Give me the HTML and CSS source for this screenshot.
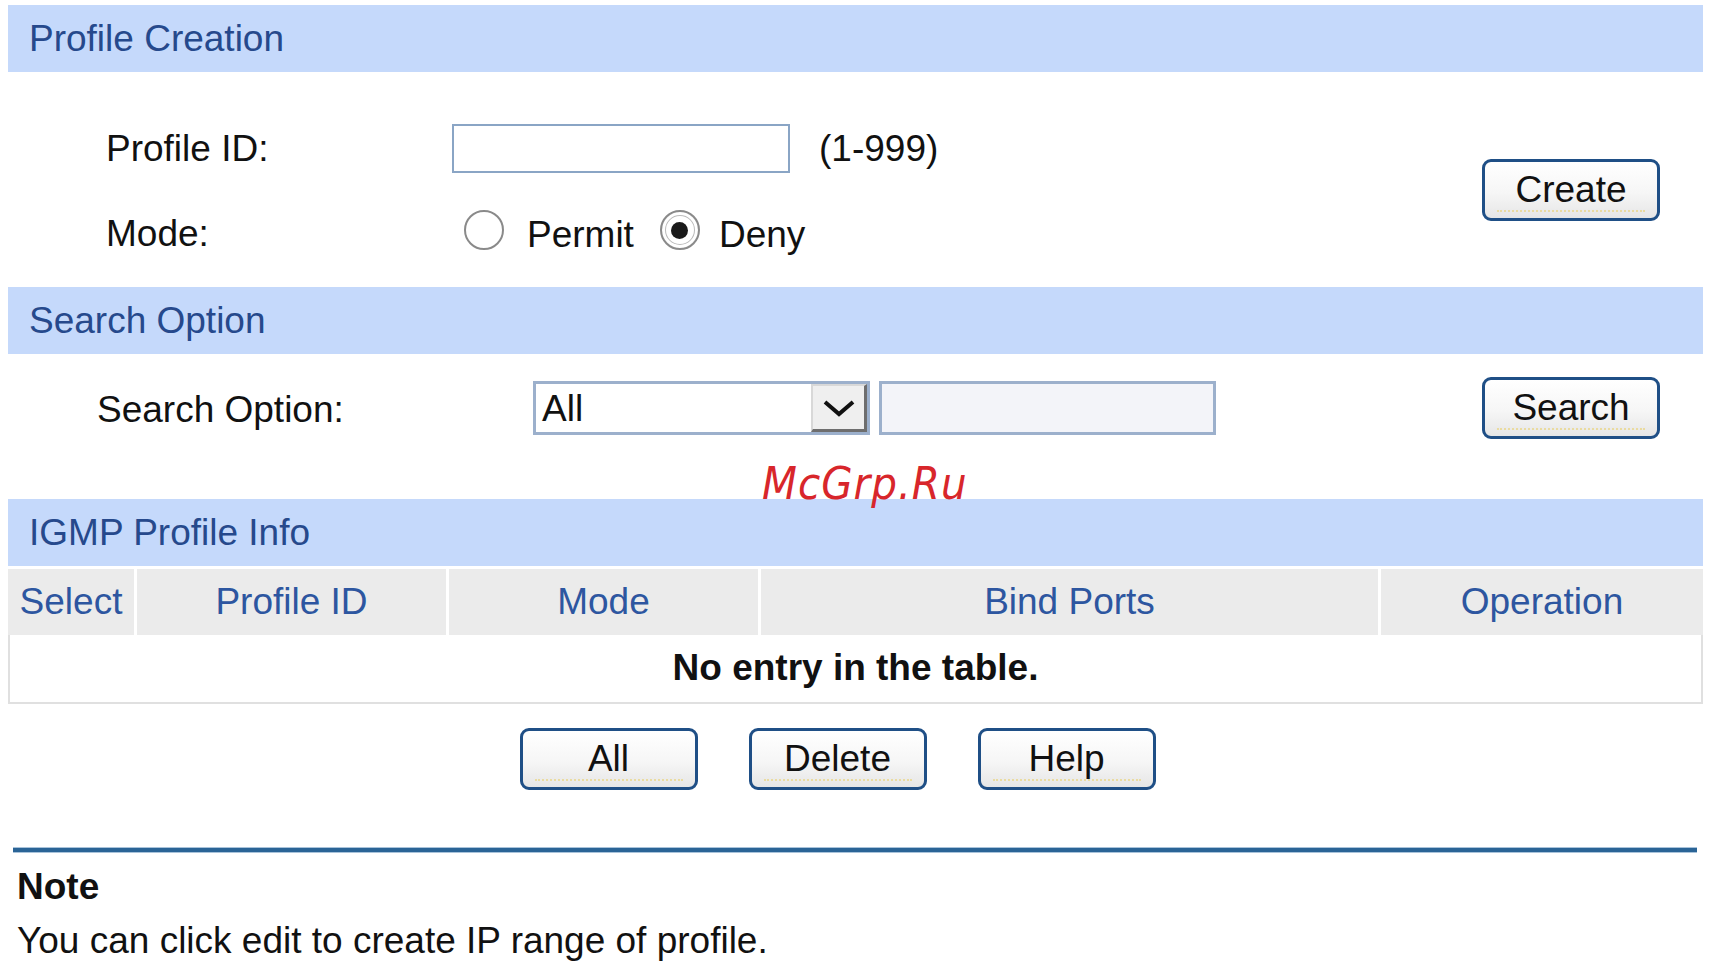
FILE: index.html
```html
<!DOCTYPE html>
<html lang="en">
<head>
    <meta charset="UTF-8">
    <meta name="viewport" content="width=device-width, initial-scale=1.0">
    <title>IGMP Profile</title>
    <link rel="stylesheet" href="styles.css">
</head>
<body>
    <div class="page">
        <div class="band">Profile Creation</div>
        <div class="create-form">
            <div class="form-rows">
                <div class="form-row">
                    <span class="label">Profile ID:</span>
                    <span class="field id-field"></span>
                    <span class="hint">(1-999)</span>
                </div>
                <div class="form-row mode-row">
                    <span class="label">Mode:</span>
                    <span class="radio"></span>
                    <span class="radio-text">Permit</span>
                    <span class="radio checked"></span>
                    <span class="radio-text">Deny</span>
                </div>
            </div>
            <button class="btn">Create</button>
        </div>

        <div class="band">Search Option</div>
        <div class="search-form">
            <span class="label search-label">Search Option:</span>
            <div class="select">
                <span class="select-value">All</span>
                <span class="select-arrow">
                    <svg width="34" height="22" viewBox="0 0 34 22"><polyline points="3,5 17,17 31,5" fill="none" stroke="#111" stroke-width="4"/></svg>
                </span>
            </div>
            <span class="field search-field"></span>
            <button class="btn">Search</button>
        </div>

        <div class="band">IGMP Profile Info</div>
        <div class="table-head">
            <div class="th">Select</div>
            <div class="th">Profile ID</div>
            <div class="th">Mode</div>
            <div class="th">Bind Ports</div>
            <div class="th">Operation</div>
        </div>
        <div class="table-empty">No entry in the table.</div>

        <div class="actions">
            <button class="btn">All</button>
            <button class="btn">Delete</button>
            <button class="btn">Help</button>
        </div>

        <div class="rule"></div>
        <div class="note">
            <div class="note-title">Note</div>
            <div>You can click edit to create IP range of profile.</div>
        </div>
    </div>

    <div class="watermark">McGrp.Ru</div>
</body>
</html>
```

FILE: styles.css
```css
body {
    margin: 0;
    background: #fff;
    font-family: "Liberation Sans", Arial, sans-serif;
    font-size: 37px;
    color: #111;
}

.page {
    width: 1695px;
    padding: 5px 8px 0 8px;
}

.band {
    height: 67px;
    line-height: 67px;
    padding-left: 21px;
    background-color: #c5d9fb;
    color: #26498c;
}

/* profile creation */
.create-form {
    display: flex;
    align-items: center;
    justify-content: space-between;
    padding: 52px 43px 32px 0;
}

.form-rows {
    display: flex;
    flex-direction: column;
    gap: 32px;
}

.form-row {
    display: flex;
    align-items: center;
    height: 49px;
}

.label {
    width: 444px;
    flex-shrink: 0;
    padding-left: 98px;
    box-sizing: border-box;
}

.field {
    display: block;
    height: 49px;
    box-sizing: border-box;
    border: 2px solid #8aa5c5;
    background: #fff;
}

.id-field {
    width: 338px;
}

.hint {
    margin-left: 29px;
}

.mode-row {
    height: 50px;
}

.mode-row .label {
    position: relative;
    top: 4px;
}

.radio {
    width: 40px;
    height: 40px;
    flex-shrink: 0;
    box-sizing: border-box;
    border: 2px solid #8a8a8a;
    border-radius: 50%;
    background: #fff;
    display: flex;
    align-items: center;
    justify-content: center;
    margin-left: 12px;
}

.radio.checked {
    margin-left: 26px;
    box-shadow: inset 0 0 0 3px #fff, inset 0 0 0 4px #bbb;
}

.radio.checked::after {
    content: "";
    width: 17px;
    height: 17px;
    border-radius: 50%;
    background: #1a1a1a;
}

.radio-text {
    margin-left: 23px;
    position: relative;
    top: 5px;
}

.radio.checked + .radio-text {
    margin-left: 19px;
}

.btn {
    position: relative;
    width: 178px;
    height: 62px;
    font-family: "Liberation Sans", Arial, sans-serif;
    font-size: 37px;
    color: #111;
    border: 3px solid #1f4f86;
    border-radius: 9px;
    background: linear-gradient(#ffffff, #f6f6f6 55%, #e6e6e6);
    padding: 0;
}

.btn::after {
    content: "";
    position: absolute;
    left: 12px;
    right: 12px;
    bottom: 6px;
    border-bottom: 2px dotted #eadba0;
}

/* search option */
.search-form {
    display: flex;
    align-items: center;
    padding: 23px 43px 60px 0;
}

.search-label {
    width: 525px;
    padding-left: 89px;
    position: relative;
    top: 2px;
}

.select {
    display: flex;
    width: 337px;
    height: 54px;
    box-sizing: border-box;
    border: 3px solid #9cb0cc;
    background: #fff;
}

.select-value {
    flex: 1;
    line-height: 50px;
    padding-left: 6px;
}

.select-arrow {
    width: 56px;
    box-sizing: border-box;
    background: #efefef;
    border-left: 2px solid #d8d8d8;
    border-top: 2px solid #d8d8d8;
    border-right: 3px solid #6e6e6e;
    border-bottom: 3px solid #6e6e6e;
    display: flex;
    align-items: center;
    justify-content: center;
}

.search-field {
    width: 337px;
    height: 54px;
    margin-left: 9px;
    border: 3px solid #9cb0cc;
    background: #f3f4f9;
}

.search-form .btn {
    margin-left: auto;
}

/* table */
.table-head {
    display: grid;
    grid-template-columns: 126px 309px 309px 617px 1fr;
    column-gap: 3px;
    margin-top: 3px;
}

.th {
    height: 66px;
    line-height: 66px;
    text-align: center;
    background: #ebebeb;
    color: #2d56a0;
}

.table-empty {
    height: 69px;
    line-height: 66px;
    box-sizing: border-box;
    border: 2px solid #e0e0e0;
    border-top: none;
    text-align: center;
    font-weight: bold;
}

.actions {
    display: flex;
    justify-content: center;
    gap: 51px;
    padding: 24px 36px 0 0;
}

.rule {
    height: 4px;
    margin: 57px 6px 0 5px;
    background: #2a6496;
    border-top: 1px solid #a9c3da;
    border-bottom: 1px solid #a9c3da;
}

.note {
    padding: 7px 0 0 9px;
    line-height: 54px;
}

.note-title {
    font-weight: bold;
}

.watermark {
    position: absolute;
    left: 762px;
    top: 457px;
    font-family: "DejaVu Sans Condensed", "DejaVu Sans", sans-serif;
    font-stretch: condensed;
    font-style: oblique;
    font-size: 45px;
    color: #d8262b;
    letter-spacing: 1px;
}
```
